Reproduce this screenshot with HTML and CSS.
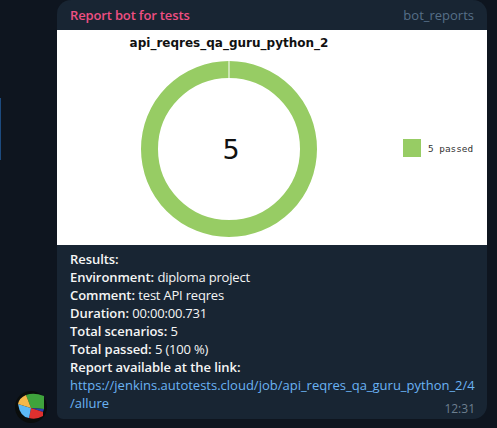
FILE: index.html
```html
<!DOCTYPE html>
<html lang="en">
  <head>
    <meta charset="UTF-8" />
    <meta name="viewport" content="width=device-width, initial-scale=1.0" />
    <title>Report bot for tests</title>
    <link rel="stylesheet" href="styles.css">
  </head>
  <body>
    <div class="side-mark"></div>
    <div class="avatar-col">
      <svg class="avatar" width="34" height="34" viewBox="0 0 34 34">
        <circle cx="17" cy="17" r="16" fill="#0a0d0c" />
        <path d="M17 18 L12 5 Q20 2 30 6 L30 19 Z" fill="#3fa33c" />
        <path d="M17 18 L30 19 L29 22 Z" fill="#2a3fb0" />
        <path d="M17 18 L29 22 L29 26 Q22 30 15 28 Z" fill="#e0302f" />
        <path d="M17 18 L15 28 Q6 27 4 14 Z" fill="#5cb8f5" />
        <path d="M17 18 L4 14 Q5 8 12 5 Z" fill="#f7b84a" />
      </svg>
    </div>
    <div class="bubble">
      <div class="bubble-head">
        <span class="sender">Report bot for tests</span>
        <span class="via">bot_reports</span>
      </div>
      <svg class="chart" width="430" height="215" viewBox="0 0 430 215">
        <text class="chart-title" x="172" y="17" text-anchor="middle">api_reqres_qa_guru_python_2</text>
        <circle cx="172" cy="119" r="79.5" fill="none" stroke="#97cc64" stroke-width="17" />
        <rect x="171.5" y="30" width="1" height="18" fill="#fff" />
        <text class="chart-count" x="174" y="129" text-anchor="middle">5</text>
        <rect x="346" y="109" width="18" height="18" fill="#97cc64" />
        <text class="chart-legend" x="371" y="122">5 passed</text>
      </svg>
      <div class="bubble-text">
        <div class="line"><b>Results:</b></div>
        <div class="line"><b>Environment:</b> <span class="val">diploma project</span></div>
        <div class="line"><b>Comment:</b> <span class="val">test API reqres</span></div>
        <div class="line"><b>Duration:</b> <span class="val">00:00:00.731</span></div>
        <div class="line"><b>Total scenarios:</b> <span class="val">5</span></div>
        <div class="line"><b>Total passed:</b> <span class="val">5 (100 %)</span></div>
        <div class="line"><b>Report available at the link:</b></div>
        <a class="line link" href="#">https://jenkins.autotests.cloud/job/api_reqres_qa_guru_python_2/4<br>/allure</a>
        <span class="time">12:31</span>
      </div>
    </div>
  </body>
</html>
```

FILE: styles.css
```css
html,
body {
  height: 100%;
}

body {
  margin: 0;
  background-color: #0e151f;
  font-family: "Open Sans", sans-serif;
  font-size: 13px;
  color: #f5f5f5;
  display: flex;
  overflow: hidden;
  position: relative;
}

.side-mark {
  position: absolute;
  left: 0;
  top: 98px;
  width: 1px;
  height: 62px;
  background: #1c4a7e;
}

.avatar-col {
  width: 57px;
  height: 419px;
  display: flex;
  align-items: flex-end;
  flex-shrink: 0;
}

.avatar {
  margin-left: 14px;
  margin-bottom: -5px;
  filter: blur(0.7px);
}

.bubble {
  width: 430px;
  height: 419px;
  background: #182533;
  border-radius: 14px 14px 14px 6px;
  overflow: hidden;
  position: relative;
}

.bubble-head {
  height: 30px;
  padding: 0 13px;
  display: flex;
  justify-content: space-between;
  align-items: center;
}

.sender {
  color: #ee4f82;
  font-weight: 600;
  letter-spacing: -0.15px;
}

.via {
  color: #566f88;
}

.chart {
  display: block;
  background: #fff;
}

.chart-title {
  font-family: "DejaVu Sans", sans-serif;
  font-weight: bold;
  font-size: 12px;
  fill: #111;
}

.chart-count {
  font-family: "DejaVu Sans", sans-serif;
  font-size: 27px;
  fill: #111;
}

.chart-legend {
  font-family: "DejaVu Sans Mono", monospace;
  font-size: 9.4px;
  fill: #333;
}

.bubble-text {
  padding: 5px 13px 0;
}

.line {
  display: block;
  line-height: 18px;
  white-space: nowrap;
}

.line b {
  font-weight: 600;
  letter-spacing: -0.06px;
}

.val {
  letter-spacing: -0.2px;
}

.link {
  color: #6ab3f3;
  text-decoration: none;
}

.time {
  position: absolute;
  right: 12px;
  bottom: 2px;
  font-size: 12px;
  color: #6d7f8f;
}
```
